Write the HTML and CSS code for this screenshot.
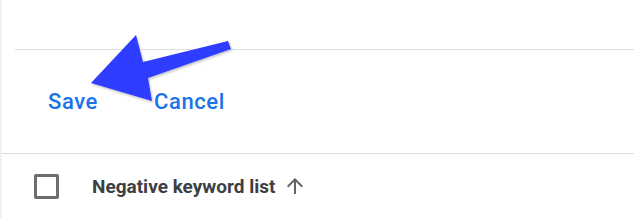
FILE: index.html
```html
<!DOCTYPE html>
<html>
<head>
<meta charset="utf-8">
<link rel="stylesheet" href="styles.css">
</head>
<body>
<div class="panel">
  <div class="top-space"></div>
  <div class="actions">
    <button class="btn save">Save</button>
    <button class="btn cancel">Cancel</button>
  </div>
  <div class="table-head">
    <span class="checkbox"></span>
    <span class="col-title">Negative keyword list</span>
    <svg class="sort-icon" width="24" height="24" viewBox="0 0 24 24"><path d="M4 12l1.41 1.41L11 7.83V20h2V7.83l5.58 5.59L20 12l-8-8-8 8z" fill="#5f6368"/></svg>
  </div>
  <svg class="annot-arrow" width="634" height="218" viewBox="0 0 634 218">
    <defs>
      <filter id="sh" x="-10%" y="-10%" width="130%" height="130%">
        <feDropShadow dx="1" dy="1.5" stdDeviation="1.2" flood-color="#000" flood-opacity="0.25"/>
      </filter>
    </defs>
    <polygon points="91,83 136,35 143,62 228,41 231,49 148,78 152,101" fill="#2e3cff" filter="url(#sh)"/>
  </svg>
</div>
</body>
</html>
```
FILE: styles.css
```css
html, body {
  margin: 0;
  padding: 0;
  background: #fff;
}
.panel {
  position: relative;
  width: 634px;
  height: 218px;
  box-sizing: border-box;
  border-left: 2px solid #f1f1f1;
  font-family: Roboto, "Liberation Sans", Arial, sans-serif;
  overflow: hidden;
}
.top-space {
  height: 49px;
}
.actions {
  margin-left: 13px;
  border-top: 1px solid #dadce0;
  height: 103px;
  display: flex;
  align-items: center;
}
.btn {
  background: none;
  border: none;
  padding: 0;
  font-family: Roboto, "Liberation Sans", Arial, sans-serif;
  font-weight: 500;
  font-size: 22px;
  letter-spacing: 0.6px;
  color: #1a73e8;
}
.save {
  margin-left: 33px;
}
.cancel {
  margin-left: 56px;
}
.table-head {
  border-top: 1px solid #dadce0;
  height: 64px;
  display: flex;
  align-items: center;
}
.checkbox {
  width: 19px;
  height: 19px;
  border: 3px solid #6d6d6d;
  border-radius: 2px;
  margin-left: 32px;
}
.col-title {
  margin-left: 33px;
  font-weight: 700;
  font-size: 19px;
  color: #3c4043;
}
.sort-icon {
  margin-left: 8px;
}
.annot-arrow {
  position: absolute;
  left: -2px;
  top: 0;
}
```
